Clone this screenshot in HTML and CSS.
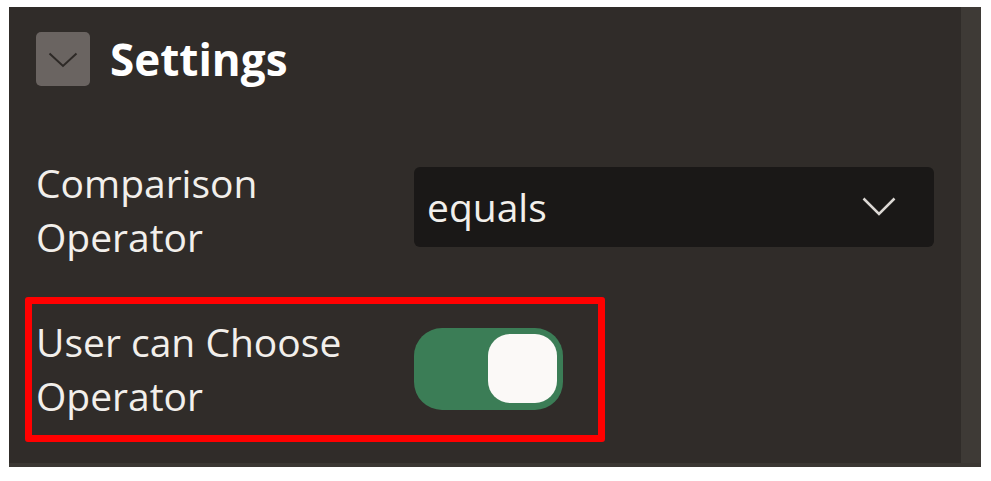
FILE: index.html
```html
<!DOCTYPE html>
<html lang="en">
<head>
<meta charset="utf-8">
<title>Settings</title>
<link rel="stylesheet" href="styles.css">
</head>
<body>
<div class="panel">
  <div class="content">
    <div class="header">
      <button class="collapse" type="button" aria-label="Collapse">
        <svg width="30" height="16" viewBox="0 0 30 16"><path d="M1.5 1.5 L15 14 L28.5 1.5" fill="none" stroke="#2d2926" stroke-width="2"/></svg>
      </button>
      <h2 class="title">Settings</h2>
    </div>
    <div class="row row-first">
      <label class="label">Comparison Operator</label>
      <div class="select">
        <span class="select-value">equals</span>
        <svg class="select-chev" width="34" height="19" viewBox="0 0 34 19"><path d="M1.5 1.5 L17 17 L32.5 1.5" fill="none" stroke="#dcd8d4" stroke-width="2.5"/></svg>
      </div>
    </div>
    <div class="row row-highlight">
      <label class="label">User can Choose Operator</label>
      <div class="toggle"><span class="knob"></span></div>
    </div>
  </div>
  <div class="scrolltrack"></div>
</div>
</body>
</html>
```
FILE: styles.css
```css
html, body {
  margin: 0;
  padding: 0;
  background: #ffffff;
}
body {
  padding: 7px 10px 14px 9px;
  font-family: "Open Sans", "Noto Sans", sans-serif;
}
.panel {
  display: flex;
  width: 972px;
  height: 456px;
  background: #302c29;
  border-bottom: 4px solid #3b3733;
}
.content {
  flex: 1;
  padding: 25px 27px 0 27px;
  color: #f2efeb;
}
.scrolltrack {
  width: 20px;
  background: #3e3a36;
}
.header {
  display: flex;
  align-items: center;
  gap: 20px;
  height: 54px;
}
.collapse {
  width: 54px;
  height: 54px;
  border: 0;
  border-radius: 5px;
  background: #6a6461;
  display: flex;
  align-items: center;
  justify-content: center;
  padding: 0;
}
.collapse svg { margin-top: 2px; }
.title {
  margin: 0;
  font-size: 44px;
  font-weight: 700;
  color: #ffffff;
  line-height: 54px;
}
.row {
  display: flex;
  align-items: center;
}
.row-first {
  margin-top: 70px;
}
.label {
  width: 378px;
  font-size: 39px;
  line-height: 54px;
}
.select {
  flex: 1;
  height: 80px;
  margin-top: -6px;
  background: #1a1817;
  border-radius: 6px;
  display: flex;
  align-items: center;
  justify-content: space-between;
  padding: 0 38px 0 13px;
}
.select-value {
  font-size: 39px;
  line-height: 54px;
}
.select-chev { margin-top: -2px; }
.row-highlight {
  width: fit-content;
  margin-top: 33px;
  margin-left: -11px;
  border: 7px solid #ff0000;
  border-radius: 3px;
  padding: 11px 35px 12px 4px;
}
.toggle {
  width: 149px;
  height: 82px;
  border-radius: 28px;
  background: #3b7d56;
  padding: 6px;
  box-sizing: border-box;
  display: flex;
  justify-content: flex-end;
}
.knob {
  width: 69px;
  height: 69px;
  border-radius: 22px;
  background: #fbf9f7;
}
```
